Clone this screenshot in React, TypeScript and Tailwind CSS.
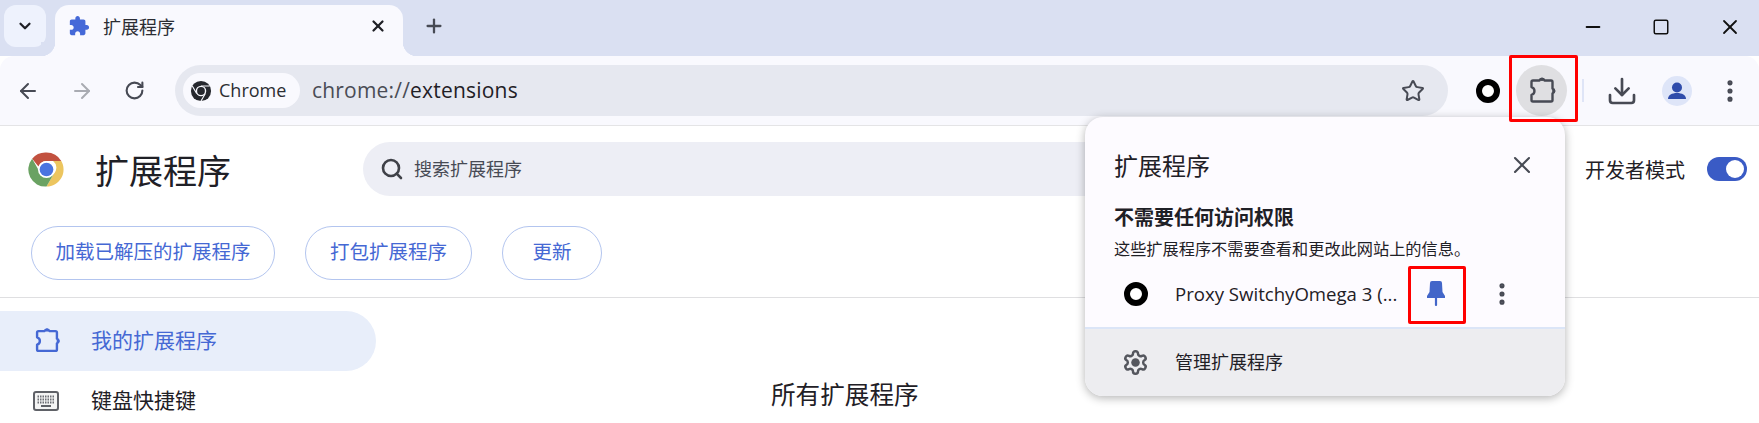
import { MoreVertical, Search, X, Plus, ArrowLeft, ArrowRight, RotateCw, Star, Download, Minus, Square, ChevronDown } from "lucide-react";

const cjk = "font-['Inter','Noto_Sans_CJK_SC',sans-serif]";
const latin = "font-['Open_Sans','Noto_Sans_CJK_SC',sans-serif]";

const outlinePuzzle =
  "M6 5h4.300a1.800 1.800 0 0 1 3.400 0H18a1 1 0 0 1 1 1v4.400a1.700 1.700 0 0 1 0 3.200V18a1 1 0 0 1-1 1H6a1 1 0 0 1-1-1v-3.400a2.700 2.700 0 0 0 0-5.200V6a1 1 0 0 1 1-1z";

function PuzzleOutline({ className, weight = 1.6 }: { className?: string; weight?: number }) {
  return (
    <svg viewBox="0 0 24 24" className={className} fill="none" stroke="currentColor" strokeWidth={weight} strokeLinejoin="round">
      <path d={outlinePuzzle} />
      <circle cx="12" cy="4.300" r="1.100" fill="currentColor" stroke="none" />
      <circle cx="19.800" cy="12" r="1.100" fill="currentColor" stroke="none" />
    </svg>
  );
}

function PuzzleFilled({ className }: { className?: string }) {
  return (
    <svg viewBox="0 0 24 24" className={className} fill="currentColor">
      <path d="M20.5 11H19V7c0-1.1-.9-2-2-2h-4V3.5C13 2.12 11.88 1 10.5 1S8 2.12 8 3.5V5H4c-1.1 0-1.99.9-1.99 2v3.8H3.5c1.49 0 2.7 1.21 2.7 2.7s-1.21 2.7-2.7 2.7H2V20c0 1.1.9 2 2 2h3.8v-1.5c0-1.49 1.21-2.7 2.7-2.7 1.49 0 2.7 1.21 2.7 2.7V22H17c1.1 0 2-.9 2-2v-4h1.5c1.38 0 2.5-1.12 2.5-2.5S21.88 11 20.5 11z" />
    </svg>
  );
}

function ChromeLogo({ className }: { className?: string }) {
  return (
    <svg viewBox="0 0 48 48" className={className}>
      <path d="M24 4a20 20 0 0 1 17.3 10H24a10 10 0 0 0-9.4 6.6L7.2 11.400A20 20 0 0 1 24 4z" fill="#c2513f" />
      <path d="M41.3 14A20 20 0 0 1 24 44l8.600-15a10 10 0 0 0-.9-15z" fill="#ecc55f" />
      <path d="M24 44A20 20 0 0 1 7.2 11.400l8.500 14.800A10 10 0 0 0 32.600 29L24 44z" fill="#6aa262" />
      <circle cx="24" cy="24" r="10" fill="#fff" />
      <circle cx="24" cy="24" r="8" fill="#4a74e0" />
    </svg>
  );
}

function ChromeMono({ className }: { className?: string }) {
  return (
    <svg viewBox="0 0 48 48" className={className}>
      <circle cx="24" cy="24" r="22" fill="#26282e" />
      <path d="M24 13h19M14.500 29.500L5 13M33.500 29.500L24 46" stroke="#f9f9fe" strokeWidth="2.500" fill="none" />
      <circle cx="24" cy="24" r="11.500" fill="#f9f9fe" />
      <circle cx="24" cy="24" r="8.500" fill="#26282e" />
    </svg>
  );
}

function Ring() {
  return <span className="block size-6 rounded-full border-[6px] border-black bg-white" />;
}

function Pin() {
  return (
    <svg viewBox="0 0 18 25" className="h-[25px] w-[18px]" fill="#4366c9">
      <path d="M5 0h8a2 2 0 0 1 2 2l.5 9L18 15v2H0v-2l2.500-4L3 2a2 2 0 0 1 2-2z" />
      <rect x="7.900" y="16" width="2.200" height="9" rx="1" />
    </svg>
  );
}

function Gear() {
  return (
    <svg viewBox="0 0 24 24" className="size-[27px]" fill="none" stroke="#55575e" strokeWidth={2.200}>
      <path d="M12.220 2h-.44a2 2 0 0 0-2 2v.18a2 2 0 0 1-1 1.730l-.43.25a2 2 0 0 1-2 0l-.15-.08a2 2 0 0 0-2.730.73l-.22.38a2 2 0 0 0 .73 2.730l.15.1a2 2 0 0 1 1 1.720v.51a2 2 0 0 1-1 1.740l-.15.09a2 2 0 0 0-.73 2.730l.22.38a2 2 0 0 0 2.730.73l.15-.08a2 2 0 0 1 2 0l.43.25a2 2 0 0 1 1 1.730V20a2 2 0 0 0 2 2h.44a2 2 0 0 0 2-2v-.18a2 2 0 0 1 1-1.730l.43-.25a2 2 0 0 1 2 0l.15.08a2 2 0 0 0 2.730-.73l.22-.39a2 2 0 0 0-.73-2.730l-.15-.08a2 2 0 0 1-1-1.740v-.5a2 2 0 0 1 1-1.740l.15-.09a2 2 0 0 0 .73-2.730l-.22-.38a2 2 0 0 0-2.730-.73l-.15.08a2 2 0 0 1-2 0l-.43-.25a2 2 0 0 1-1-1.730V4a2 2 0 0 0-2-2z" />
      <circle cx="12" cy="12" r="3.800" fill="#55575e" stroke="none" />
    </svg>
  );
}

function Keyboard() {
  return (
    <svg viewBox="0 0 26 20" className="h-[20px] w-[26px]">
      <rect x="1" y="1" width="24" height="18" rx="2" fill="#f4f4f4" stroke="#5f6167" strokeWidth="2" />
      <path d="M4.500 5.500h17M4.500 8.500h17M4.500 11.500h17" stroke="#6d6f75" strokeWidth="1.800" strokeDasharray="1.500 1" />
      <rect x="8" y="14" width="10" height="2" fill="#5f6167" />
    </svg>
  );
}

function Toolbar() {
  return (
    <div className="flex h-[70px] shrink-0 items-center rounded-t-[14px] border-b border-[#e4e4e6] bg-[#f9f9fe] text-[#474a54]">
      <div className="ml-[16px] flex w-[148px] items-center gap-[30px]">
        <ArrowLeft className="size-6" strokeWidth={2} />
        <ArrowRight className="size-6 text-[#a9abb2]" strokeWidth={2} />
        <RotateCw className="size-[21px]" strokeWidth={2.400} />
      </div>
      <div className="ml-[11px] flex h-[51px] w-[1273px] items-center rounded-full bg-[#e6e8f0] pl-2 pr-[23px]">
        <div className={`flex h-[35px] w-[117px] items-center gap-[7px] rounded-full bg-[#f9f9fe] pl-[7px] text-[18px] text-[#2b2d33] ${latin}`}>
          <ChromeMono className="size-[22px]" />
          Chrome
        </div>
        <span className={`ml-[12px] text-[21px] tracking-[.2px] text-[#4a4c55] ${latin}`}>
          chrome://<span className="text-[#1f2026]">extensions</span>
        </span>
        <Star className="ml-auto size-6 text-[#474a54]" strokeWidth={2} />
      </div>
      <div className="ml-[28px]">
        <Ring />
      </div>
      <div className="ml-[16px] flex size-[51px] items-center justify-center rounded-full bg-[#dfdfe2]">
        <PuzzleOutline className="ml-[1px] size-[36px]" />
      </div>
      <span className="ml-[15px] h-[23px] w-[2px] bg-[#dfe5f7]" />
      <Download className="ml-[22px] size-[32px]" strokeWidth={2} />
      <div className="ml-[24px] flex size-[30px] items-center justify-center overflow-hidden rounded-full bg-[#dee5f8]">
        <svg viewBox="0 0 30 30" className="size-[30px]" fill="#2f4cab">
          <circle cx="15" cy="11.500" r="5" />
          <path d="M6 23c0-4 4-6 9-6s9 2 9 6z" />
        </svg>
      </div>
      <MoreVertical className="ml-[24px] size-7" strokeWidth={2.400} />
    </div>
  );
}

function TabStrip() {
  return (
    <div className="flex h-14 shrink-0 bg-[#dae0f2]">
      <div className="ml-1 mt-[5px] flex h-[42px] w-[42px] items-center justify-center rounded-[12px] bg-[#eef2fd]">
        <ChevronDown className="size-[18px] text-[#1f2026]" strokeWidth={3} />
      </div>
      <div className="relative ml-[9px] mt-[5px] flex h-[51px] w-[348px] items-center rounded-t-[14px] bg-[#f9f9fe] pb-[9px] pl-[13px]">
        <span className="absolute -left-[14px] bottom-0 size-[14px] bg-[radial-gradient(circle_at_0_0,#dae0f2_14px,#f9f9fe_14.500px)]" />
        <span className="absolute -right-[14px] bottom-0 size-[14px] bg-[radial-gradient(circle_at_100%_0,#dae0f2_14px,#f9f9fe_14.500px)]" />
        <PuzzleFilled className="size-[22px] text-[#4569d8]" />
        <span className={`ml-[13px] mt-[2px] text-[18px] text-[#2b2d33] ${cjk}`}>扩展程序</span>
        <X className="ml-auto mr-[16px] size-[18px] text-[#1f2026]" strokeWidth={3} />
      </div>
      <Plus className="ml-[20px] mt-[15px] size-[22px] text-[#474a54]" strokeWidth={2.500} />
      <div className="ml-auto mr-[17px] mt-[17px] flex h-5 items-center gap-[48px] text-[#111]">
        <Minus className="size-[22px]" strokeWidth={2} />
        <Square className="size-[18px]" strokeWidth={2} />
        <X className="size-[24px]" strokeWidth={1.800} />
      </div>
    </div>
  );
}

function ExtensionsPopup() {
  return (
    <div className={`absolute left-[1085px] top-[117px] w-[480px] overflow-hidden rounded-[18px] bg-[#fdfbff] text-[#1f2026] shadow-[0_2px_10px_rgba(0,0,0,0.3)] ${cjk}`}>
      <div className="flex h-[73px] items-center justify-between pl-[29px] pr-[29px] pt-[26px]">
        <span className="text-[24px]">扩展程序</span>
        <X className="mb-[4px] size-[28px] text-[#474a54]" strokeWidth={1.800} />
      </div>
      <div className="mt-[14px] pl-[29px]">
        <div className="text-[20px] font-bold leading-[28px]">不需要任何访问权限</div>
        <div className="mt-[3px] text-[16.200px] leading-[28px]">这些扩展程序不需要查看和更改此网站上的信息。</div>
      </div>
      <div className="flex h-[64px] items-center pb-[3px] pl-[39px]">
        <Ring />
        <span className={`ml-[27px] w-[222px] whitespace-nowrap text-[18.600px] ${latin}`}>Proxy SwitchyOmega 3 (...</span>
        <span className="ml-[30px] flex w-[18px]">
          <Pin />
        </span>
        <MoreVertical className="ml-[43px] size-7 text-[#474a54]" strokeWidth={2.400} />
      </div>
      <div className="flex h-[69px] items-center border-t-2 border-[#dbe5f7] bg-[#ededf0] pl-[37px]">
        <Gear />
        <span className="ml-[26px] text-[18px]">管理扩展程序</span>
      </div>
    </div>
  );
}

export default function App() {
  return (
    <div className={`relative flex h-[423px] w-[1759px] flex-col overflow-hidden bg-white ${cjk}`}>
      <TabStrip />
      <Toolbar />
      <div className="flex h-[86px] shrink-0 items-center pl-[26px] pr-[12px]">
        <ChromeLogo className="size-[41px]" />
        <h1 className="ml-[28px] mt-[5px] text-[34px] font-normal text-[#1f2026]">扩展程序</h1>
        <div className="ml-[132px] flex h-[54px] w-[1000px] items-center rounded-l-full bg-[#edeef5] pl-[17px] text-[18px] text-[#474a54]">
          <Search className="size-[24px] text-[#3f4148]" strokeWidth={2.600} />
          <span className="ml-[10px]">搜索扩展程序</span>
        </div>
        <span className="ml-auto mt-[4px] text-[20px] text-[#1f2026]">开发者模式</span>
        <div className="ml-[22px] flex h-[24px] w-10 items-center justify-end rounded-full bg-[#3a5bc5] pr-[3px]">
          <span className="size-[18px] rounded-full bg-white" />
        </div>
      </div>
      <div className="mt-[14px] flex shrink-0 pl-[31px] text-[19.500px] text-[#4568d4]">
        <button className="h-[54px] w-[244px] rounded-full border border-[#b3c5ef]">加载已解压的扩展程序</button>
        <button className="ml-[30px] h-[54px] w-[167px] rounded-full border border-[#b3c5ef]">打包扩展程序</button>
        <button className="ml-[30px] h-[54px] w-[100px] rounded-full border border-[#b3c5ef]">更新</button>
      </div>
      <div className="mt-[17px] h-px shrink-0 bg-[#dfdfe1]" />
      <div className="flex pt-[13px]">
        <nav className="w-[376px] shrink-0 text-[21px]">
          <div className="flex h-[60px] items-center rounded-r-full bg-[#e8eefa] pl-[30px] text-[#4568d4]">
            <PuzzleOutline className="size-[34px]" weight={1.7} />
            <span className="ml-[27px]">我的扩展程序</span>
          </div>
          <div className="flex h-[60px] items-center pl-[33px] text-[#1f2026]">
            <Keyboard />
            <span className="ml-[32px]">键盘快捷键</span>
          </div>
        </nav>
        <div className="ml-[395px] pt-[66px] text-[24.600px] leading-[36px] text-[#1f2026]">所有扩展程序</div>
      </div>
      <ExtensionsPopup />
      <span className="absolute left-[1509px] top-[55px] h-[67px] w-[69px] rounded-[2px] border-[3px] border-[#f00]" />
      <span className="absolute left-[1408px] top-[266px] h-[58px] w-[58px] rounded-[2px] border-[3px] border-[#f00]" />
    </div>
  );
}
